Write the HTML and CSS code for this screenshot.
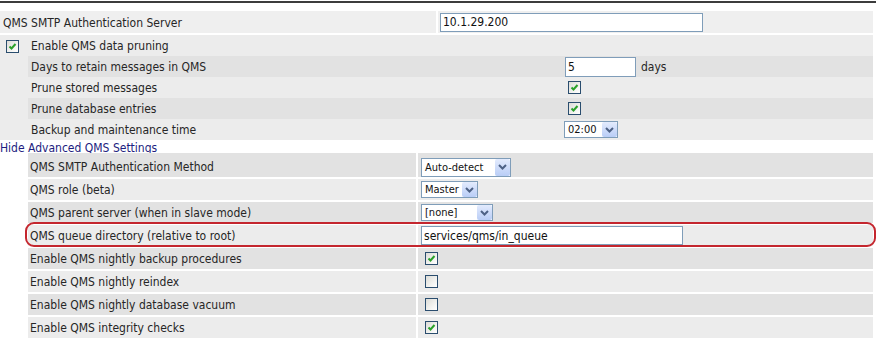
FILE: index.html
```html
<!DOCTYPE html>
<html lang="en">
<head>
  <meta charset="UTF-8">
  <meta name="viewport" content="width=device-width, initial-scale=1.0">
  <title>QMS Settings</title>
  <link rel="stylesheet" href="styles.css">
</head>
<body>
  <div class="rule"></div>

  <div class="settings">
    <!-- SMTP server -->
    <div class="server">
      <div class="cell label">QMS SMTP Authentication Server</div>
      <div class="cell value"><input class="field server-field" type="text" value="10.1.29.200"></div>
    </div>

    <!-- Data pruning -->
    <div class="pruning">
      <div class="pruning-head">
        <span class="check on"><svg viewBox="0 0 11 11" width="11" height="11"><polyline points="2.5,5.5 4.5,7.5 8.5,3" /></svg></span>
        <span>Enable QMS data pruning</span>
      </div>
      <div class="subrows">
        <div class="subrow">
          <div class="label">Days to retain messages in QMS</div>
          <div class="value"><input class="field days-field" type="text" value="5"><span class="unit">days</span></div>
        </div>
        <div class="subrow">
          <div class="label">Prune stored messages</div>
          <div class="value"><span class="check on"><svg viewBox="0 0 11 11" width="11" height="11"><polyline points="2.5,5.5 4.5,7.5 8.5,3" /></svg></span></div>
        </div>
        <div class="subrow">
          <div class="label">Prune database entries</div>
          <div class="value"><span class="check on"><svg viewBox="0 0 11 11" width="11" height="11"><polyline points="2.5,5.5 4.5,7.5 8.5,3" /></svg></span></div>
        </div>
        <div class="subrow">
          <div class="label">Backup and maintenance time</div>
          <div class="value">
            <span class="select time"><span>02:00</span><span class="arrow"><svg viewBox="0 0 15 15" width="15" height="15"><polyline points="4,6 7.5,9.5 11,6" /></svg></span></span>
          </div>
        </div>
      </div>
    </div>

    <a class="toggle" href="#">Hide Advanced QMS Settings</a>

    <!-- Advanced settings -->
    <div class="adv">
      <div class="adv-row first">
        <div class="cell label">QMS SMTP Authentication Method</div>
        <div class="cell value">
          <span class="select method"><span>Auto-detect</span><span class="arrow"><svg viewBox="0 0 15 15" width="15" height="15"><polyline points="4,6 7.5,9.5 11,6" /></svg></span></span>
        </div>
      </div>
      <div class="adv-row">
        <div class="cell label">QMS role (beta)</div>
        <div class="cell value">
          <span class="select role"><span>Master</span><span class="arrow"><svg viewBox="0 0 15 15" width="15" height="15"><polyline points="4,6 7.5,9.5 11,6" /></svg></span></span>
        </div>
      </div>
      <div class="adv-row">
        <div class="cell label">QMS parent server (when in slave mode)</div>
        <div class="cell value">
          <span class="select parent"><span>[none]</span><span class="arrow"><svg viewBox="0 0 15 15" width="15" height="15"><polyline points="4,6 7.5,9.5 11,6" /></svg></span></span>
        </div>
      </div>
      <div class="adv-row marked">
        <div class="cell label">QMS queue directory (relative to root)</div>
        <div class="cell value"><input class="field queue-field" type="text" value="services/qms/in_queue"></div>
      </div>
      <div class="adv-row">
        <div class="cell label">Enable QMS nightly backup procedures</div>
        <div class="cell value"><span class="check on"><svg viewBox="0 0 11 11" width="11" height="11"><polyline points="2.5,5.5 4.5,7.5 8.5,3" /></svg></span></div>
      </div>
      <div class="adv-row">
        <div class="cell label">Enable QMS nightly reindex</div>
        <div class="cell value"><span class="check"></span></div>
      </div>
      <div class="adv-row">
        <div class="cell label">Enable QMS nightly database vacuum</div>
        <div class="cell value"><span class="check"></span></div>
      </div>
      <div class="adv-row">
        <div class="cell label">Enable QMS integrity checks</div>
        <div class="cell value"><span class="check on"><svg viewBox="0 0 11 11" width="11" height="11"><polyline points="2.5,5.5 4.5,7.5 8.5,3" /></svg></span></div>
      </div>
    </div>
  </div>
</body>
</html>
```

FILE: styles.css
```css
body {
  margin: 0;
  font-family: "DejaVu Sans Condensed", "DejaVu Sans", sans-serif;
  font-size: 12px;
  color: #262626;
  background: #fff;
}
.rule {
  width: 876px;
  height: 2px;
  margin-top: 1px;
  background: #3c3c3c;
}
.settings {
  width: 873px;
  margin-top: 8px;
}
.cell, .label, .value {
  display: flex;
  align-items: center;
  white-space: nowrap;
}

/* server row */
.server {
  display: grid;
  grid-template-columns: 436px 1fr;
  column-gap: 2px;
  height: 22px;
}
.server .cell {
  background: #efefef;
}
.server .label {
  padding-left: 3px;
  padding-top: 1px;
}
.server .value {
  padding-left: 2px;
}

/* inputs */
.field {
  box-sizing: border-box;
  height: 19px;
  border: 1px solid #7f9db9;
  padding: 0 2px;
  font-family: inherit;
  font-size: 12px;
  color: #111;
  background: #fff;
  outline: none;
}
.server-field {
  width: 263px;
}
.days-field {
  width: 71px;
  height: 20px;
  margin-left: 1px;
}
.queue-field {
  width: 262px;
}
.unit {
  margin-left: 5px;
}

/* checkboxes */
.check {
  box-sizing: border-box;
  display: inline-flex;
  align-items: center;
  justify-content: center;
  width: 13px;
  height: 13px;
  border: 1px solid #2a4d6e;
  background: linear-gradient(135deg, #dcdcd7, #f6f6f4 70%, #fff);
  margin-left: 4px;
}
.check svg polyline {
  fill: none;
  stroke: #2aa12a;
  stroke-width: 2;
}

/* selects */
.select {
  box-sizing: border-box;
  display: inline-flex;
  align-items: center;
  justify-content: space-between;
  height: 17px;
  border: 1px solid #7f9db9;
  background: #fff;
  padding-left: 3px;
  font-size: 11px;
  color: #111;
}
.select .arrow {
  display: flex;
  width: 15px;
  height: 15px;
  background: linear-gradient(#e3ebfd, #b9cdf6);
  border-radius: 2px;
}
.select .arrow svg polyline {
  fill: none;
  stroke: #4d6185;
  stroke-width: 2;
}
.time {
  width: 54px;
}
.method {
  width: 90px;
  height: 19px;
}
.method .arrow {
  height: 17px;
}
.role {
  width: 57px;
}
.parent {
  width: 72px;
}

/* pruning block */
.pruning {
  margin-top: 2px;
  background: #ececec;
}
.pruning-head {
  box-sizing: border-box;
  display: flex;
  align-items: center;
  height: 21px;
  padding-top: 1px;
}
.pruning-head .check {
  margin: 0 12px 0 6px;
}
.subrows {
  margin-left: 28px;
}
.subrow {
  display: grid;
  grid-template-columns: 534px 1fr;
  height: 21px;
}
.subrow:nth-child(odd) {
  background: #e2e2e2;
}
.subrow .label {
  padding-left: 3px;
}
.subrow .value {
  padding-left: 2px;
}
.subrow .check {
  margin-left: 4px;
}

/* toggle link */
.toggle {
  display: block;
  height: 13px;
  line-height: 17px;
  color: #1d1d80;
  text-decoration: none;
}

/* advanced rows */
.adv {
  margin-left: 28px;
  display: flex;
  flex-direction: column;
  row-gap: 2px;
}
.adv-row {
  display: grid;
  grid-template-columns: 388px 1fr;
  column-gap: 2px;
  height: 21px;
}
.adv-row.first {
  height: 24px;
}
.adv-row.first .cell {
  padding-top: 4px;
}
.adv-row .cell {
  background: #ececec;
}
.adv-row:nth-child(odd) .cell {
  background: #e2e2e2;
}
.adv-row .label {
  padding-left: 2px;
}
.adv-row .value {
  padding-left: 3px;
}
.adv-row.marked {
  position: relative;
}
.adv-row.marked::after {
  content: "";
  position: absolute;
  left: -3px;
  right: -3px;
  top: -3px;
  bottom: -1px;
  border: 2px solid #c4262e;
  border-radius: 9px;
  pointer-events: none;
}
```
